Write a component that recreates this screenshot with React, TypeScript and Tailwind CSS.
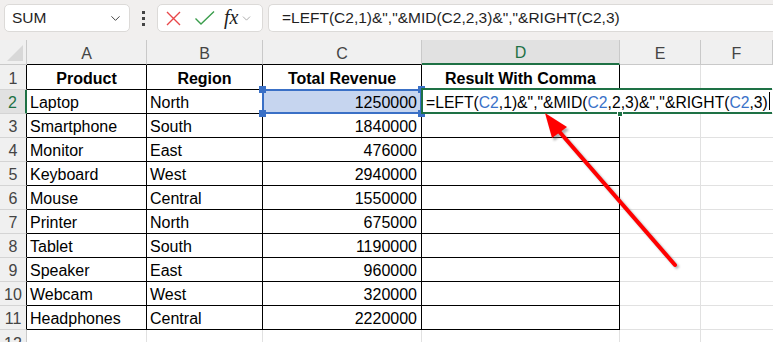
import { ChevronDown } from "lucide-react";

const data = [
  ["Laptop", "North", "1250000"],
  ["Smartphone", "South", "1840000"],
  ["Monitor", "East", "476000"],
  ["Keyboard", "West", "2940000"],
  ["Mouse", "Central", "1550000"],
  ["Printer", "North", "675000"],
  ["Tablet", "South", "1190000"],
  ["Speaker", "East", "960000"],
  ["Webcam", "West", "320000"],
  ["Headphones", "Central", "2220000"],
];

const cols = ["A", "B", "C", "D", "E", "F"];

function Toolbar() {
  return (
    <div className="h-[40px] bg-[#f1efee] flex items-start pt-[4px] pl-[4px]">
      <div className="w-[126px] h-[28px] bg-white border border-[#dcdad8] rounded-[5px] flex items-center justify-between pl-[7px] pr-[6px]">
        <span className="text-[15.5px] text-[#1f1f1f]">SUM</span>
        <ChevronDown className="w-[15px] h-[15px] text-[#444]" strokeWidth={1.6} />
      </div>
      <div className="w-[27px] h-[28px] flex flex-col items-center justify-center gap-[3px]">
        <div className="w-[3px] h-[3px] bg-[#444]" />
        <div className="w-[3px] h-[3px] bg-[#444]" />
        <div className="w-[3px] h-[3px] bg-[#444]" />
      </div>
      <div className="w-[106px] h-[28px] bg-white border border-[#dcdad8] rounded-[5px] flex items-center pl-[7px]">
        <svg width="17" height="17" viewBox="0 0 17 17" className="mr-[12px]">
          <path d="M2 2 L15 15 M15 2 L2 15" stroke="#e8474a" strokeWidth="1.4" fill="none" />
        </svg>
        <svg width="21" height="16" viewBox="0 0 21 16" className="mr-[9px]">
          <path d="M1.5 8.5 L7 14 L20 1.5" stroke="#3a9d4c" strokeWidth="1.4" fill="none" />
        </svg>
        <span
          className="text-[20px] italic text-[#222] leading-none mr-[2px] -mt-[2px]"
          style={{ fontFamily: "'Liberation Serif', serif" }}
        >
          fx
        </span>
        <ChevronDown className="w-[13px] h-[13px] text-[#9a9a9a]" strokeWidth={1.5} />
      </div>
      <div className="ml-[5px] flex-1 h-[28px] bg-white border border-r-0 border-[#dcdad8] rounded-l-[5px] flex items-center pl-[13px]">
        <span className="text-[15.5px] text-[#1f1f1f] whitespace-nowrap">
          =LEFT(C2,1)&amp;","&amp;MID(C2,2,3)&amp;","&amp;RIGHT(C2,3)
        </span>
      </div>
    </div>
  );
}

function Formula() {
  return (
    <span className="relative z-10 h-full bg-white flex items-center pt-[3px] pl-[3px] pr-[2px] whitespace-nowrap text-[15.7px] text-black">
      =LEFT(<span className="text-[#3a72c8]">C2</span>,1)&amp;","&amp;MID(
      <span className="text-[#3a72c8]">C2</span>,2,3)&amp;","&amp;RIGHT(
      <span className="text-[#3a72c8]">C2</span>,3)
      <span className="ml-[1px] -mt-[3px] w-[1px] h-[18px] bg-black" />
    </span>
  );
}

function Sheet() {
  return (
    <div className="grid grid-cols-[27px_120px_116px_159px_198px_81px_1fr] text-[16px] text-black">
      {/* column headers */}
      <div className="h-[25px] bg-[#f0f0f0] border-r border-b border-[#c9c9c9] relative">
        <div className="absolute right-[3px] bottom-[3px] w-0 h-0 border-l-[16px] border-l-transparent border-b-[16px] border-b-[#d8d8d8]" />
      </div>
      {cols.map((c) => (
        <div
          key={c}
          className={
            c === "D"
              ? "h-[25px] pt-[3px] bg-[#e1e1e1] border-r border-[#c9c9c9] border-b-2 border-b-[#1e7145] text-[#1e7145] flex items-center justify-center"
              : c === "E" || c === "F"
              ? "h-[25px] pt-[3px] bg-[#f0f0f0] border-r border-b border-[#c9c9c9] text-[#444] flex items-center justify-center"
              : "h-[25px] pt-[3px] bg-[#f0f0f0] border-r border-[#c9c9c9] border-b border-b-black text-[#444] flex items-center justify-center"
          }
        >
          {c}
        </div>
      ))}

      {/* row 1 */}
      <div className="h-[25px] pt-[3px] bg-[#f0f0f0] border-b border-[#d4d4d4] border-r border-r-black text-[#444] flex items-center justify-center">
        1
      </div>
      {["Product", "Region", "Total Revenue", "Result With Comma"].map((h) => (
        <div key={h} className="h-[25px] pt-[3px] border-r border-b border-black font-bold flex items-center justify-center">
          {h}
        </div>
      ))}
      <div className="h-[25px] border-r border-b border-[#e1e1e1]" />
      <div className="h-[25px] border-b border-[#e1e1e1]" />

      {/* rows 2-11 */}
      {data.map((r, i) => {
        const active = i === 0;
        return (
          <div key={i} className="contents">
            <div
              className={
                active
                  ? "h-[24px] pt-[3px] bg-[#e1e1e1] border-b border-[#d4d4d4] border-r-2 border-r-[#1e7145] text-[#1e7145] flex items-center justify-center"
                  : "h-[24px] pt-[3px] bg-[#f0f0f0] border-b border-[#d4d4d4] border-r border-r-black text-[#444] flex items-center justify-center"
              }
            >
              {i + 2}
            </div>
            <div className="h-[24px] pt-[3px] border-r border-b border-black flex items-center pl-[3px]">{r[0]}</div>
            <div className="h-[24px] pt-[3px] border-r border-b border-black flex items-center pl-[3px]">{r[1]}</div>
            {active ? (
              <div className="h-[24px] pt-[3px] border-r border-b border-black bg-[#c6d5ef] relative flex items-center justify-end pr-[4px]">
                {r[2]}
                <div className="absolute -left-[1px] -top-[1px] -right-[1px] -bottom-[1px] border-2 border-[#3a70c6]" />
                <div className="absolute -left-[4px] -top-[4px] w-[7px] h-[7px] bg-[#3a70c6]" />
                <div className="absolute -right-[4px] -top-[4px] w-[7px] h-[7px] bg-[#3a70c6]" />
                <div className="absolute -left-[4px] -bottom-[4px] w-[7px] h-[7px] bg-[#3a70c6]" />
                <div className="absolute -right-[4px] -bottom-[4px] w-[7px] h-[7px] bg-[#3a70c6]" />
              </div>
            ) : (
              <div className="h-[24px] pt-[3px] border-r border-b border-black flex items-center justify-end pr-[4px]">{r[2]}</div>
            )}
            {active ? (
              <div className="h-[24px] border-r border-b border-black relative z-10">
                <div className="absolute -left-[1px] -top-[2px] h-[26px] flex">
                  <div className="border-l-2 border-t-2 border-b-2 border-[#1e7145] flex">
                    <Formula />
                  </div>
                </div>
                <div className="absolute left-0 right-0 -top-[1px] h-[2px] bg-[#1e7145]" />
                <div className="absolute left-0 right-0 -bottom-[1px] h-[2px] bg-[#1e7145]" />
                <div className="absolute -right-[4px] -bottom-[4px] w-[6px] h-[6px] bg-[#1e7145] border border-white" />
              </div>
            ) : (
              <div className="h-[24px] border-r border-b border-black" />
            )}
            <div className="h-[24px] border-r border-b border-[#e1e1e1]" />
            <div className="h-[24px] border-b border-[#e1e1e1]" />
          </div>
        );
      })}

      {/* row 12 */}
      <div className="h-[24px] pt-[3px] bg-[#f0f0f0] border-r border-[#c9c9c9] text-[#444] flex items-center justify-center">12</div>
      <div className="h-[24px] border-r border-[#e1e1e1]" />
      <div className="h-[24px] border-r border-[#e1e1e1]" />
      <div className="h-[24px] border-r border-[#e1e1e1]" />
      <div className="h-[24px] border-r border-[#e1e1e1]" />
      <div className="h-[24px] border-r border-[#e1e1e1]" />
      <div className="h-[24px]" />
    </div>
  );
}

export default function App() {
  return (
    <div
      className="relative w-[773px] h-[342px] overflow-hidden bg-white"
      style={{ fontFamily: "'Liberation Sans', Arial, sans-serif" }}
    >
      <Toolbar />
      <Sheet />
      {/* annotation arrow */}
      <svg className="absolute left-0 top-0 pointer-events-none z-20" width="773" height="342">
        <defs>
          <filter id="blur" x="-20%" y="-20%" width="140%" height="140%">
            <feGaussianBlur stdDeviation="1.2" />
          </filter>
        </defs>
        <g filter="url(#blur)" opacity="0.45">
          <line x1="678" y1="268" x2="560" y2="132" stroke="#555" strokeWidth="4" />
          <polygon points="547,116 569,130 554,141" fill="#555" />
        </g>
        <line x1="675" y1="265" x2="557" y2="129" stroke="#ff0000" strokeWidth="4" strokeLinecap="round" />
        <polygon points="545,113 567,127 552,138" fill="#ff0000" />
      </svg>
    </div>
  );
}
